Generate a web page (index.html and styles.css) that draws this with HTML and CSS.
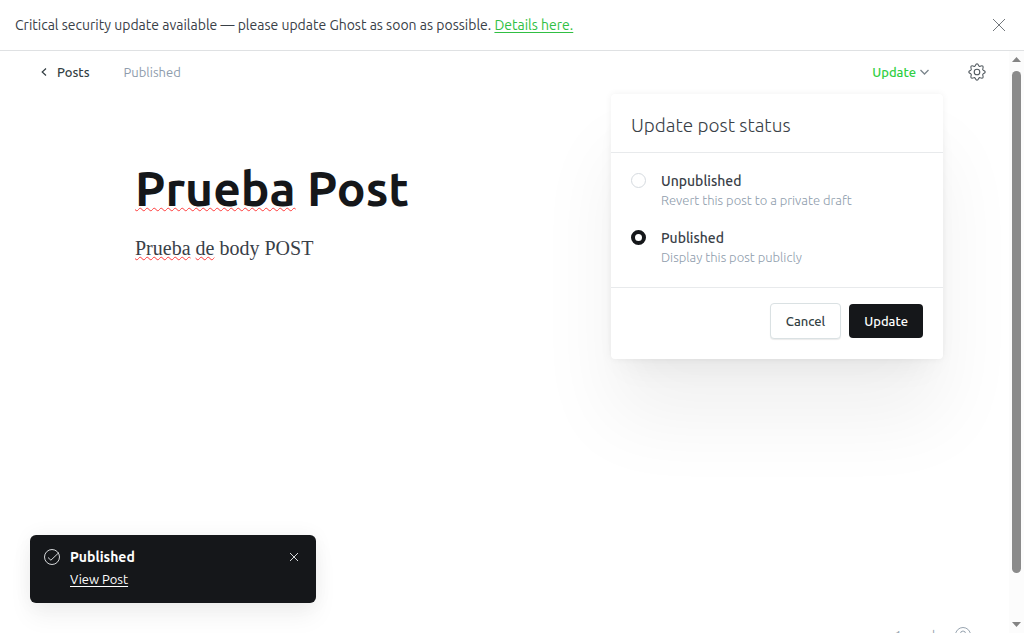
FILE: index.html
```html
<!DOCTYPE html>
<html lang="en">
<head>
<meta charset="utf-8">
<meta name="viewport" content="width=device-width, initial-scale=1">
<title>Prueba Post</title>
<link rel="stylesheet" href="styles.css">
</head>
<body>
<div class="app">
  <aside class="alert">
    <p class="alert-text">Critical security update available — please update Ghost as soon as possible. <a class="alert-link" href="#details">Details here.</a></p>
    <button class="icon-button" aria-label="Dismiss">
      <svg width="14" height="14" viewBox="0 0 14 14" fill="none" stroke="#62686d" stroke-width=".9"><path d="M1 1l12 12M13 1L1 13"/></svg>
    </button>
  </aside>
  <div class="workspace">
    <main class="editor">
      <header class="toolbar">
        <a class="back" href="#posts">
          <svg width="6" height="8" viewBox="0 0 6 8" fill="none" stroke="#343f44" stroke-width="1.2"><path d="M5 .5L1.2 4 5 7.500"/></svg>
          Posts
        </a>
        <span class="state">Published</span>
        <div class="publish">
          <button class="publish-trigger">Update
            <svg width="9" height="6" viewBox="0 0 9 6" fill="none" stroke="#7b858c" stroke-width="1.3"><path d="M.5 1L4.500 5 8.500 1"/></svg>
          </button>
          <form class="menu">
            <h2 class="menu-title">Update post status</h2>
            <div class="choices">
              <label class="choice">
                <input class="radio" type="radio" name="status">
                <span class="choice-text"><span class="choice-name">Unpublished</span><span class="choice-note">Revert this post to a private draft</span></span>
              </label>
              <label class="choice">
                <input class="radio" type="radio" name="status" checked>
                <span class="choice-text"><span class="choice-name">Published</span><span class="choice-note">Display this post publicly</span></span>
              </label>
            </div>
            <div class="actions">
              <button class="button" type="button">Cancel</button>
              <button class="button button-dark" type="button">Update</button>
            </div>
          </form>
        </div>
        <button class="icon-button" aria-label="Settings">
          <svg width="18" height="18" viewBox="0 0 18 18" fill="none" stroke="#50585e" stroke-width="1.1" stroke-linejoin="round"><circle cx="9" cy="9" r="2.800"/><path d="M7.200 2.700Q9-1.200 10.800 2.700Q11.300 3.600 12.200 3.200Q16.200 1.800 14.800 5.800Q14.400 6.700 15.300 7.200Q19.200 9 15.300 10.800Q14.400 11.300 14.800 12.200Q16.200 16.200 12.200 14.800Q11.300 14.400 10.800 15.300Q9 19.200 7.200 15.300Q6.700 14.400 5.800 14.800Q1.800 16.200 3.200 12.200Q3.600 11.300 2.700 10.800Q-1.200 9 2.700 7.200Q3.600 6.700 3.200 5.800Q1.800 1.800 5.800 3.200Q6.700 3.600 7.200 2.700Z"/></svg>
        </button>
      </header>
      <article class="post">
        <h1 class="post-title"><span class="misspelt">Prueba</span> Post</h1>
        <p class="post-body"><span class="misspelt">Prueba</span> <span class="misspelt">de</span> body POST</p>
      </article>
      <section class="toast">
        <svg width="16" height="16" viewBox="0 0 16 16" fill="none" stroke="#d5d8da"><circle cx="8" cy="8" r="7.500"/><path d="M4 8.500l2.900 2.700 8-7.600"/></svg>
        <div class="toast-text">
          <strong class="toast-title">Published</strong>
          <a class="toast-link" href="#view">View Post</a>
        </div>
        <button class="icon-button" aria-label="Close">
          <svg width="10" height="10" viewBox="0 0 10 10" fill="none" stroke="#d5d8da"><path d="M1 1l8 8M9 1L1 9"/></svg>
        </button>
      </section>
      <footer class="status-bar">
        <span>1 word</span>
        <svg width="16" height="16" viewBox="0 0 16 16" fill="none" stroke="#98a4b0"><circle cx="8" cy="8" r="7.500"/><path d="M5.500 6.500Q5.500 4 8 4t2.500 2.500Q10.500 8 8 9.300M8 11v1.500"/></svg>
      </footer>
    </main>
    <div class="scrollbar" aria-hidden="true">
      <svg width="9" height="5" viewBox="0 0 9 5" fill="#848484"><path d="M4.500 0L9 5H0z"/></svg>
      <div class="scroll-track"><div class="scroll-thumb"></div></div>
      <svg width="9" height="5" viewBox="0 0 9 5" fill="#848484"><path d="M0 0h9L4.500 5z"/></svg>
    </div>
  </div>
</div>
</body>
</html>
```

FILE: styles.css
```css
* { box-sizing: border-box; }

body {
  margin: 0;
  background: #fff;
  color: #394047;
  font-family: Ubuntu, "Noto Sans", "Open Sans", sans-serif;
  font-size: 13px;
  line-height: 20px;
}

h1, h2, p { margin: 0; }
button { font: inherit; cursor: pointer; }
svg { display: block; flex: none; }

.app {
  display: flex;
  flex-direction: column;
  height: 100vh;
  overflow: hidden;
}

.icon-button {
  display: flex;
  padding: 0;
  border: 0;
  background: none;
}

.alert {
  display: flex;
  align-items: center;
  justify-content: space-between;
  padding: 14px 18px 14px 15px;
  border-bottom: 1px solid #dfe1e3;
}
.alert-text { font-size: 14px; line-height: 22px; }
.alert-link { color: #30bf43; text-underline-offset: 2px; }

.workspace {
  display: flex;
  flex: 1;
  min-height: 0;
}

.editor {
  position: relative;
  flex: 1;
  min-width: 0;
  overflow: hidden;
}

.toolbar {
  display: flex;
  align-items: center;
  padding: 11px 23px 10px 41px;
}
.back {
  display: flex;
  align-items: center;
  gap: 10px;
  color: #343f44;
  font-weight: 500;
  text-decoration: none;
}
.state { margin-left: 34px; color: #8e9cac; }
.publish { position: relative; margin-left: auto; margin-right: 39px; }
.publish-trigger {
  display: flex;
  align-items: center;
  gap: 4px;
  padding: 0;
  border: 0;
  background: none;
  color: #30cf43;
  font-weight: 500;
}

.menu {
  position: absolute;
  z-index: 2;
  top: 32px;
  right: -14px;
  width: 332px;
  border-radius: 4px;
  background: #fff;
  box-shadow: 0 0 7px rgba(0, 0, 0, .06), 0 60px 80px rgba(0, 0, 0, .06), 0 20px 30px -14px rgba(0, 0, 0, .06);
}
.menu-title {
  padding: 19px 20px 15px;
  border-bottom: 1px solid #e8eaec;
  font-size: 19px;
  font-weight: 300;
  line-height: 24px;
}
.choices {
  display: grid;
  gap: 18px;
  padding: 18px 20px 20px;
}
.choice { display: flex; gap: 15px; }
.radio {
  appearance: none;
  flex: none;
  width: 15px;
  height: 15px;
  margin: 2px 0 0;
  border: 1px solid #d5dadf;
  border-radius: 50%;
  background: #fff;
}
.radio:checked { border: 4px solid #15171a; }
.choice-text { display: flex; flex-direction: column; }
.choice-name { font-size: 14px; font-weight: 500; }
.choice-note { color: #8e9cac; font-weight: 300; line-height: 19px; }

.actions {
  display: flex;
  align-items: center;
  justify-content: flex-end;
  gap: 8px;
  padding: 15px 20px 20px;
  border-top: 1px solid #e8eaec;
}
.button {
  height: 36px;
  padding: 0 15px;
  border: 1px solid #dae1e3;
  border-radius: 4px;
  background: #fff;
  box-shadow: 0 1px 1px rgba(0, 0, 0, .08);
  color: #343f44;
  font-weight: 500;
}
.button-dark {
  height: 34px;
  border: 0;
  background: #15171a;
  box-shadow: none;
  color: #fff;
}

.post { padding: 66px 135px 0; }
.post-title {
  color: #15171a;
  font-size: 48px;
  font-weight: 600;
  line-height: 60px;
}
.post-body {
  margin-top: 14px;
  font-family: "Liberation Serif", serif;
  font-size: 20px;
  line-height: 32px;
}
.misspelt {
  text-decoration: underline wavy #ff3b3b 1px;
  text-decoration-skip-ink: none;
}

.toast {
  position: absolute;
  bottom: 30px;
  left: 30px;
  display: flex;
  align-items: flex-start;
  gap: 10px;
  width: 286px;
  padding: 14px 17px 16px 14px;
  border-radius: 6px;
  background: #15171a;
  box-shadow: 0 0 20px rgba(0, 0, 0, .05), 0 14px 24px rgba(0, 0, 0, .05);
  color: #fff;
}
.toast-text {
  display: flex;
  flex: 1;
  flex-direction: column;
  align-items: flex-start;
  gap: 6px;
  line-height: 16px;
}
.toast-title { font-size: 14px; font-weight: 600; }
.toast-link { color: #fff; text-underline-offset: 2px; }
.toast .icon-button { padding-top: 3px; }

.status-bar {
  position: absolute;
  right: 38px;
  bottom: -10px;
  display: flex;
  align-items: center;
  gap: 20px;
  color: #98a4b0;
  line-height: 16px;
}

.scrollbar {
  display: flex;
  flex-direction: column;
  align-items: center;
  gap: 9px;
  width: 15px;
  padding: 6px 0;
  background: #fcfcfc;
}
.scroll-track { flex: 1; width: 9px; }
.scroll-thumb {
  height: 92.6%;
  border-radius: 5px;
  background: #8b8b8b;
}
```
